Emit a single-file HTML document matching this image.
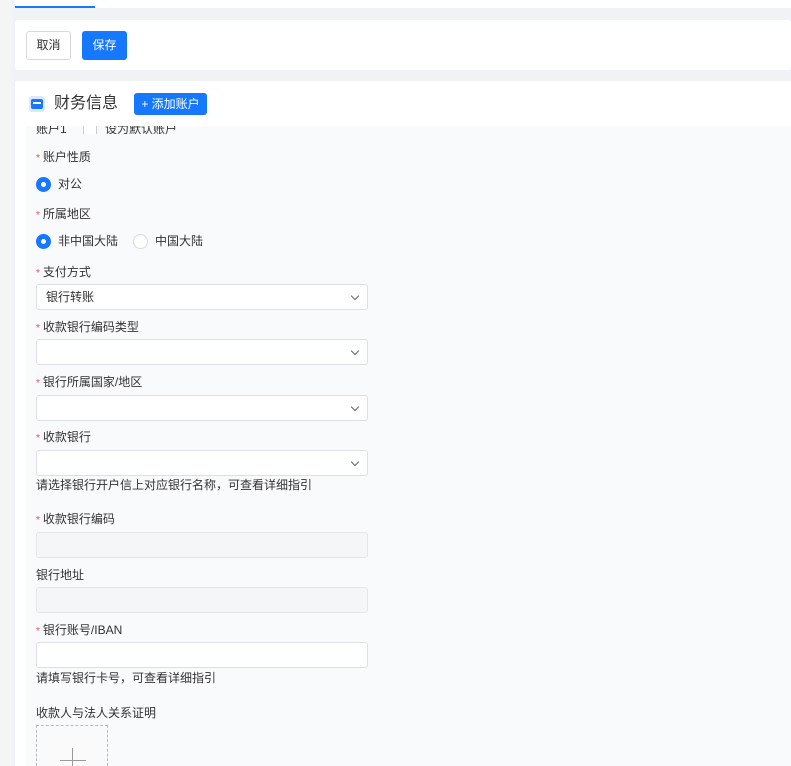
<!DOCTYPE html>
<html style="width:791px;height:766px;overflow:hidden"><head><meta charset="utf-8"><style>
*{box-sizing:border-box;margin:0;padding:0}
body{width:791px;height:766px;overflow:hidden;background:#f0f2f5;font-family:"Liberation Sans","Noto Sans CJK SC",sans-serif;font-size:12px;color:#333;position:relative}
.a{position:absolute}
.lbl{position:absolute;left:36px;font-size:12px;color:#333;line-height:14px}
.lbl i{color:#f5475d;font-style:normal;font-size:10px;margin-right:3px}
.inp{position:absolute;left:36px;width:332px;height:26px;border:1px solid #dcdfe6;border-radius:3px;background:#fff;padding-left:9px;line-height:24px;font-size:12px}
.inp.d{background:#f5f6f8;border-color:#e4e6ea}
.chev{position:absolute;right:9px;top:8px;width:6px;height:6px;border-right:1.3px solid #666;border-bottom:1.3px solid #666;transform:rotate(45deg)}
.radio{position:absolute;width:15px;height:15px;border-radius:50%;background:#1677ff}
.radio:after{content:"";position:absolute;left:5px;top:5px;width:5px;height:5px;background:#fff;border-radius:50%}
.ro{position:absolute;width:15px;height:15px;border-radius:50%;border:1px solid #d9d9d9;background:#fff}
.rt{position:absolute;font-size:12px;color:#333;line-height:14px}
</style></head><body>
<div class="a" style="left:0;top:0;width:12px;height:766px;background:#f5f5f5"></div>
<div class="a" style="left:15px;top:0;width:776px;height:8px;background:#fff"></div>
<div class="a" style="left:15px;top:6px;width:80px;height:2px;background:#1677ff"></div>
<div class="a" style="left:15px;top:20px;width:776px;height:50px;background:#fff;border-radius:3px"></div>
<div class="a" style="left:26px;top:31px;width:45px;height:29px;border:1px solid #d9d9d9;border-radius:3px;background:#fff;text-align:center;line-height:27px;font-size:12px">取消</div>
<div class="a" style="left:82px;top:31px;width:45px;height:29px;background:#1677ff;border-radius:3px;color:#fff;text-align:center;line-height:29px;font-size:12px">保存</div>
<div class="a" style="left:15px;top:81px;width:776px;height:685px;background:#fff"></div>
<div class="a" style="left:26px;top:126px;width:765px;height:640px;background:#f9fafc"></div>
<div class="a" style="left:29px;top:96px;width:16px;height:16px;background:#dbe9fc;border-radius:3px"></div>
<div class="a" style="left:31px;top:99px;width:12px;height:10px;background:#1677ff;border-radius:2px"></div>
<div class="a" style="left:33px;top:102px;width:8px;height:1.5px;background:#fff"></div>
<div class="a" style="left:54px;top:94px;font-size:16px;color:#333;line-height:20px">财务信息</div>
<div class="a" style="left:134px;top:93px;width:73px;height:22px;background:#1677ff;border-radius:3px;color:#fff;font-size:12px;line-height:22px;text-align:center">+ 添加账户</div>
<div class="a" style="left:15px;top:126px;width:776px;height:8px;overflow:hidden"><div class="a" style="left:21px;top:-6px;font-size:12px">账户1</div><div class="a" style="left:68px;top:-4px;width:14px;height:14px;border:1px solid #ccc;background:#fff"></div><div class="a" style="left:90px;top:-6px;font-size:12px">设为默认账户</div></div>
<div class="lbl" style="top:150px"><i>*</i>账户性质</div>
<div class="radio" style="left:36px;top:177px"></div><div class="rt" style="left:58px;top:177px">对公</div>
<div class="lbl" style="top:207px"><i>*</i>所属地区</div>
<div class="radio" style="left:36px;top:234px"></div><div class="rt" style="left:58px;top:234px">非中国大陆</div>
<div class="ro" style="left:133px;top:234px"></div><div class="rt" style="left:155px;top:234px">中国大陆</div>
<div class="lbl" style="top:265px"><i>*</i>支付方式</div>
<div class="inp" style="top:284px">银行转账<span class="chev"></span></div>
<div class="lbl" style="top:320px"><i>*</i>收款银行编码类型</div>
<div class="inp" style="top:339px"><span class="chev"></span></div>
<div class="lbl" style="top:375px"><i>*</i>银行所属国家/地区</div>
<div class="inp" style="top:395px"><span class="chev"></span></div>
<div class="lbl" style="top:430px"><i>*</i>收款银行</div>
<div class="inp" style="top:450px"><span class="chev"></span></div>
<div class="lbl" style="top:478px">请选择银行开户信上对应银行名称，可查看详细指引</div>
<div class="lbl" style="top:512px"><i>*</i>收款银行编码</div>
<div class="inp d" style="top:532px"></div>
<div class="lbl" style="top:568px">银行地址</div>
<div class="inp d" style="top:587px"></div>
<div class="lbl" style="top:623px"><i>*</i>银行账号/IBAN</div>
<div class="inp" style="top:642px"></div>
<div class="lbl" style="top:671px">请填写银行卡号，可查看详细指引</div>
<div class="lbl" style="top:706px">收款人与法人关系证明</div>
<div class="a" style="left:36px;top:725px;width:72px;height:41px;border:1px dashed #bbb;border-bottom:none;background:#fafafa"></div>
<div class="a" style="left:60px;top:760px;width:26px;height:1px;background:#999"></div>
<div class="a" style="left:72px;top:748px;width:1px;height:18px;background:#999"></div>
</body></html>
